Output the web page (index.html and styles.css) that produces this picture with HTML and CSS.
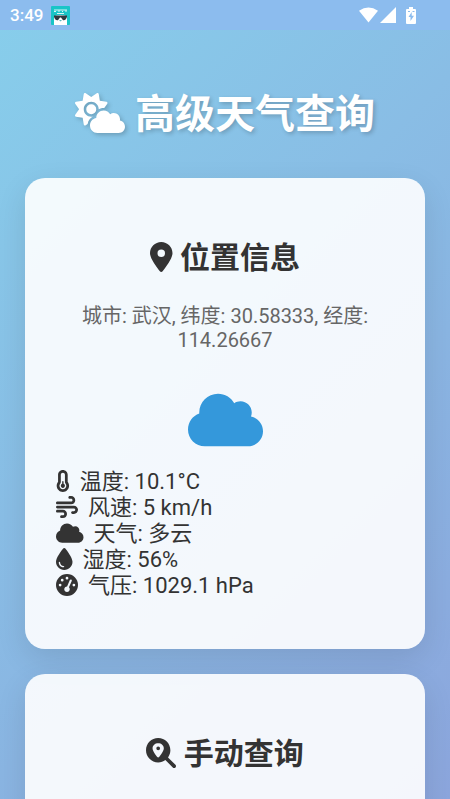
FILE: index.html
```html
<!DOCTYPE html>
<html lang="zh-CN">
<head>
<meta charset="utf-8">
<meta name="viewport" content="width=device-width, initial-scale=1">
<title>高级天气查询</title>
<link rel="stylesheet" href="styles.css">
</head>
<body>
<div class="status">
  <span class="time">3:49</span>
  <svg class="app" viewBox="0 0 19 19"><rect width="19" height="19" rx="1" fill="#19c5c7"/><path d="M3 4h13M3 5.500h2M7 5h2M11 5.500h1M14 5h2M6 7.500h7" stroke="#d5f6f5"/><path d="M3 19v-8q1-2 6.500-2t6.500 2v8z" fill="#fff"/><path d="M3 9.500h13v1.500l-1 2q-1 1.500-3 1.200l-2-2.700h-1l-2 2.700q-2 .3-3-1.200l-1-2z" fill="#303b42"/><path d="M8 14h3l-1.500 1.500z" fill="#56b8bd"/></svg>
  <span class="signals">
    <svg class="wifi" viewBox="0 0 20 16"><path d="M0 3.500Q10-3.500 20 3.500L10 16z"/></svg>
    <svg class="cell" viewBox="0 0 16 16"><path d="M16 0v16H0z"/></svg>
    <svg class="battery" viewBox="0 0 10 17"><path fill-rule="evenodd" d="M3 0h4v2h2q1 0 1 1v13q0 1-1 1H1q-1 0-1-1V3q0-1 1-1h2zM5.700 5L2.500 10h2v4L8 8.700H5.700z"/><path d="M2 4.500h2M6.500 4.500h2" stroke="#8cbcec"/></svg>
  </span>
</div>
<main>
  <h1><svg class="icon wide" viewBox="0 0 640 512"><path d="M294.2 1.2c5.1 2.1 8.700 6.700 9.600 12.100l14.100 84.700 84.700 14.100c5.400 .9 10 4.500 12.100 9.600s1.500 10.900-1.600 15.400l-38.500 55c-2.200-.1-4.400-.2-6.700-.2c-23.300 0-45.100 6.200-64 17.100l0-1.100c0-53-43-96-96-96s-96 43-96 96s43 96 96 96c8.100 0 15.900-1 23.400-2.900c-36.600 18.100-63.300 53.100-69.800 94.900l-24.400 17c-4.500 3.200-10.300 3.800-15.400 1.600s-8.700-6.700-9.600-12.100L98.100 317.900 13.400 303.800c-5.400-.9-10-4.500-12.100-9.600s-1.500-10.900 1.600-15.400L52.500 208 2.900 137.200c-3.200-4.500-3.800-10.300-1.600-15.400s6.700-8.700 12.100-9.600L98.100 98.100l14.100-84.700c.9-5.400 4.500-10 9.600-12.100s10.900-1.500 15.400 1.600L208 52.500 278.800 2.900c4.500-3.200 10.300-3.800 15.400-1.600zM144 208a64 64 0 1 1 128 0 64 64 0 1 1 -128 0zM639.9 431.900c0 44.200-35.800 80-80 80l-271.900 0c-53 0-96-43-96-96c0-47.600 34.600-87 80-94.600l0-1.300c0-53 43-96 96-96c34.900 0 65.400 18.600 82.200 46.400c13-9.100 28.800-14.400 45.800-14.400c44.200 0 80 35.800 80 80c0 5.900-.6 11.700-1.900 17.200c37.400 6.700 65.800 39.400 65.800 78.700z"/></svg> 高级天气查询</h1>
  <section class="card">
    <h2><svg class="icon narrow" viewBox="0 0 384 512"><path d="M215.700 499.200C267 435 384 279.400 384 192C384 86 298 0 192 0S0 86 0 192c0 87.400 117 243 168.300 307.200c12.300 15.300 35.100 15.300 47.400 0zM192 128a64 64 0 1 1 0 128 64 64 0 1 1 0-128z"/></svg> 位置信息</h2>
    <p class="place">城市: 武汉, 纬度: 30.58333, 经度: 114.26667</p>
    <svg class="weather" viewBox="0 0 640 512"><path id="cloud" d="M0 336c0 79.500 64.500 144 144 144l368 0c70.700 0 128-57.300 128-128c0-61.900-44-113.600-102.400-125.400c4.100-10.700 6.400-22.400 6.400-34.600c0-53-43-96-96-96c-19.700 0-38.100 6-53.300 16.200C367 64.200 315.300 32 256 32C167.600 32 96 103.600 96 192c0 2.700 .1 5.400 .2 8.100C40.200 219.800 0 273.200 0 336z"/></svg>
    <ul class="details">
      <li><svg class="icon thermo" viewBox="0 0 320 512"><path d="M160 64c-26.500 0-48 21.500-48 48V276.500c0 17.300-7.100 31.900-15.300 42.500C86.200 332.600 80 349.500 80 368c0 44.200 35.800 80 80 80s80-35.800 80-80c0-18.500-6.200-35.400-16.700-48.900c-8.200-10.600-15.300-25.200-15.300-42.500V112c0-26.500-21.500-48-48-48zM48 112C48 50.200 98.100 0 160 0s112 50.100 112 112V276.500c0 .1 .1 .3 .2 .6c.2 .6 .8 1.600 1.700 2.800c18.900 24.400 30.100 55 30.100 88.100c0 79.500-64.500 144-144 144S16 447.500 16 368c0-33.200 11.200-63.800 30.100-88.100c.9-1.200 1.500-2.200 1.700-2.800c.1-.3 .2-.5 .2-.6V112zM208 368c0 26.500-21.500 48-48 48s-48-21.500-48-48c0-20.900 13.400-38.700 32-45.300V272c0-8.800 7.200-16 16-16s16 7.200 16 16V322.700c18.600 6.600 32 24.400 32 45.300z"/></svg>温度: 10.1°C</li>
      <li><svg class="icon" viewBox="0 0 512 512"><path d="M288 32c0 17.700 14.300 32 32 32l32 0c17.700 0 32 14.300 32 32s-14.300 32-32 32L32 128c-17.700 0-32 14.300-32 32s14.300 32 32 32l320 0c53 0 96-43 96-96s-43-96-96-96L320 0c-17.700 0-32 14.300-32 32zm64 352c0 17.700 14.300 32 32 32l32 0c53 0 96-43 96-96s-43-96-96-96L32 224c-17.700 0-32 14.300-32 32s14.300 32 32 32l384 0c17.700 0 32 14.300 32 32s-14.300 32-32 32l-32 0c-17.700 0-32 14.300-32 32zM128 512l32 0c53 0 96-43 96-96s-43-96-96-96L32 320c-17.700 0-32 14.300-32 32s14.300 32 32 32l128 0c17.700 0 32 14.300 32 32s-14.300 32-32 32l-32 0c-17.700 0-32 14.300-32 32s14.300 32 32 32z"/></svg>风速: 5 km/h</li>
      <li><svg class="icon wide" viewBox="0 0 640 512"><use href="#cloud"/></svg>天气: 多云</li>
      <li><svg class="icon narrow" viewBox="0 0 384 512"><path d="M192 512C86 512 0 426 0 320C0 228.800 130.200 57.700 166.600 11.700C172.600 4.200 181.500 0 191.100 0h1.800c9.600 0 18.500 4.200 24.500 11.700C253.800 57.700 384 228.800 384 320c0 106-86 192-192 192zM96 336c0-8.800-7.200-16-16-16s-16 7.200-16 16c0 61.900 50.100 112 112 112c8.800 0 16-7.200 16-16s-7.200-16-16-16c-44.200 0-80-35.800-80-80z"/></svg>湿度: 56%</li>
      <li><svg class="icon" viewBox="0 0 512 512"><path fill-rule="evenodd" d="M0 256a256 256 0 1 1 512 0A256 256 0 1 1 0 256zM288 96a32 32 0 1 0 -64 0 32 32 0 1 0 64 0zM256 416c35.300 0 64-28.700 64-64c0-17.400-6.900-33.100-18.100-44.600L366 161.700c5.300-12.100-.2-26.300-12.300-31.600s-26.300 .2-31.600 12.300L257.900 288c-.6 0-1.300 0-1.900 0c-35.300 0-64 28.700-64 64s28.700 64 64 64zM176 144a32 32 0 1 0 -64 0 32 32 0 1 0 64 0zM96 288a32 32 0 1 0 0-64 32 32 0 1 0 0 64zm352-32a32 32 0 1 0 -64 0 32 32 0 1 0 64 0z"/></svg>气压: 1029.1 hPa</li>
    </ul>
  </section>
  <section class="card">
    <h2><svg class="icon" viewBox="0 0 512 512"><path fill-rule="evenodd" d="M416 208c0 45.900-14.900 88.300-40 122.700L502.600 457.400c12.500 12.500 12.500 32.800 0 45.300s-32.800 12.500-45.300 0L330.700 376c-34.400 25.200-76.800 40-122.700 40C93.100 416 0 322.900 0 208S93.100 0 208 0S416 93.100 416 208zM304 176c0-53-43-88-96-88s-96 35-96 88c0 48.800 56 121 80 149c8 9 24 9 32 0c24-28 80-100.200 80-149zM176 176a32 32 0 1 1 64 0 32 32 0 1 1-64 0z"/></svg> 手动查询</h2>
  </section>
</main>
</body>
</html>
```
FILE: styles.css
```css
* {
  box-sizing: border-box;
}

html {
  scrollbar-width: none;
}

body {
  margin: 0;
  min-height: 100vh;
  font-family: Roboto, "Noto Sans CJK SC", sans-serif;
  color: #333;
  background: linear-gradient(135deg, #87ceeb, #8ca4dc) no-repeat;
}

.status {
  display: flex;
  align-items: center;
  gap: 8px;
  height: 30px;
  padding: 0 34px 0 10px;
  background: #8cbcee;
  color: #fff;
}

.time {
  font-size: 17px;
  font-weight: 500;
}

.app {
  width: 19px;
  height: 19px;
}

.signals {
  display: flex;
  align-items: center;
  gap: 2px;
  margin-left: auto;
  fill: #fff;
}

.wifi {
  width: 19px;
  height: 16px;
}

.cell {
  width: 16px;
  height: 16px;
}

.battery {
  width: 10px;
  height: 17px;
  margin-left: 8px;
}

main {
  padding: 56px 25px 0;
}

h1,
h2,
p,
ul {
  margin: 0;
}

h1 {
  margin-bottom: 34px;
  text-align: center;
  font-size: 40px;
  line-height: 58px;
  color: #fff;
  text-shadow: 2px 2px 4px rgba(0, 0, 0, 0.2);
}

h1 .icon {
  filter: drop-shadow(2px 2px 2px rgba(0, 0, 0, 0.2));
}

.icon {
  width: 1em;
  height: 1em;
  vertical-align: -0.125em;
  fill: currentColor;
  overflow: visible;
}

.icon.wide {
  width: 1.25em;
}

.icon.narrow {
  width: 0.75em;
}

.icon.thermo {
  width: 0.625em;
}

.card {
  margin-bottom: 25px;
  padding: 58px 31px 50px;
  border-radius: 20px;
  background: rgba(255, 255, 255, 0.9);
  box-shadow: 0 10px 30px rgba(0, 0, 0, 0.1);
}

.card:last-child {
  margin-bottom: 0;
}

h2 {
  margin-bottom: 24px;
  text-align: center;
  font-size: 30px;
  line-height: 44px;
}

.place {
  text-align: center;
  font-size: 20px;
  line-height: 24px;
  color: #666;
}

.weather {
  display: block;
  width: 75px;
  height: 60px;
  margin: 38px auto 19px;
  fill: #3498db;
}

.details {
  padding: 0;
  list-style: none;
  font-size: 22px;
  line-height: 26px;
}

.details .icon {
  margin-right: 10px;
}
```
